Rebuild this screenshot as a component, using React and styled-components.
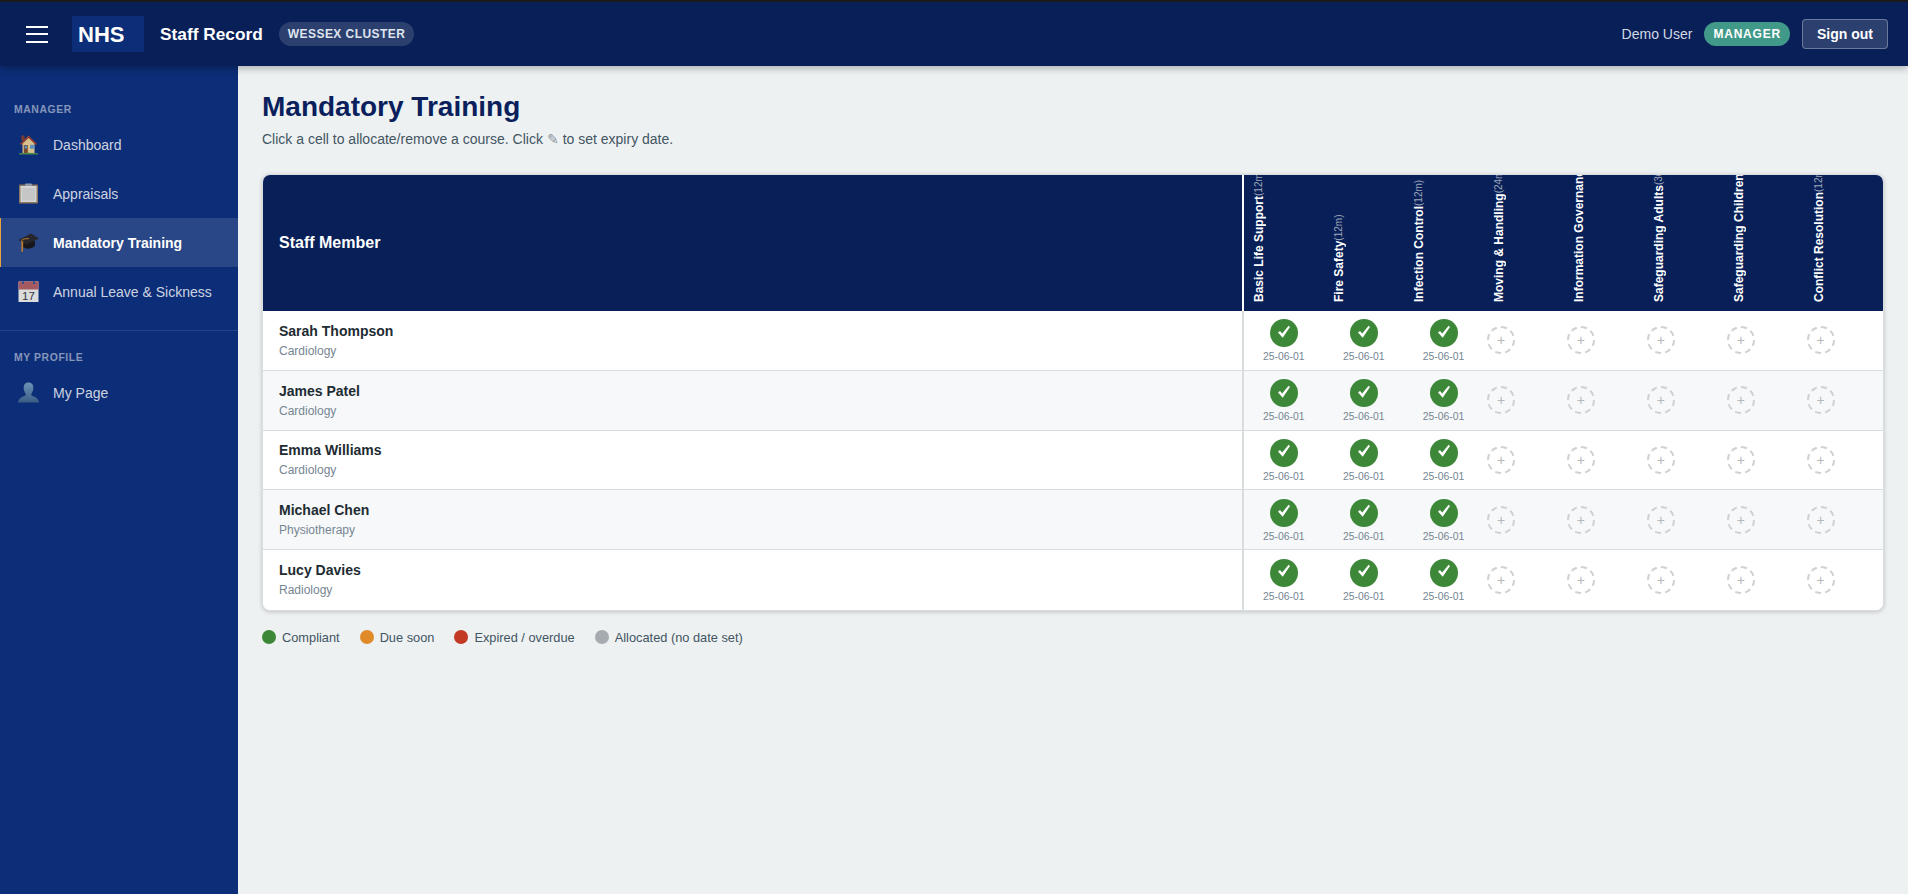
import React from 'react';
import styled, { createGlobalStyle } from 'styled-components';

const GlobalStyle = createGlobalStyle`
  * { box-sizing: border-box; }
  html, body { margin: 0; padding: 0; height: 100%; }
  body {
    font-family: "Liberation Sans", Arial, sans-serif;
    background: #eef1f2;
    color: #212b32;
    overflow: hidden;
  }
`;

const Shell = styled.div`
  display: flex;
  flex-direction: column;
  height: 894px;
  border-top: 2px solid #1c1c1c;
`;

const Header = styled.header`
  height: 64px;
  flex: none;
  display: flex;
  align-items: center;
  padding: 0 20px 0 26px;
  background: #081f57;
  box-shadow: 0 2px 8px rgba(0, 0, 0, 0.3);
  position: relative;
  z-index: 2;
`;

const Burger = styled.div`
  width: 22px;
  height: 17px;
  display: flex;
  flex-direction: column;
  justify-content: space-between;
  margin-right: 24px;
  span { display: block; height: 2px; background: #fff; }
`;

const Logo = styled.div`
  width: 72px;
  height: 36px;
  padding-left: 6px;
  background: #0c2d77;
  color: #fff;
  font-size: 22px;
  font-weight: 700;
  line-height: 38px;
  margin-right: 16px;
`;

const AppName = styled.div`
  color: #fff;
  font-size: 17.3px;
  font-weight: 700;
  margin-right: 16px;
`;

const Pill = styled.span`
  height: 24px;
  padding: 0 9px;
  border-radius: 12px;
  display: inline-flex;
  align-items: center;
  font-size: 12px;
  font-weight: 700;
  letter-spacing: ${p => (p.$role ? '0.8px' : '0.45px')};
  color: ${p => (p.$role ? '#fff' : '#dfe4ee')};
  background: ${p => (p.$role ? '#41998a' : 'rgba(255,255,255,0.15)')};
`;

const UserArea = styled.div`
  margin-left: auto;
  display: flex;
  align-items: center;
  gap: 12px;
`;

const UserName = styled.span`
  color: #d3d9e6;
  font-size: 14px;
`;

const SignOut = styled.button`
  height: 30px;
  width: 86px;
  padding: 0;
  font-family: inherit;
  font-size: 14px;
  font-weight: 700;
  color: #fff;
  background: rgba(255, 255, 255, 0.15);
  border: 1px solid rgba(255, 255, 255, 0.3);
  border-radius: 4px;
`;

const Body = styled.div`
  flex: 1;
  display: flex;
  min-height: 0;
`;

const Sidebar = styled.nav`
  width: 238px;
  flex: none;
  background: #0c2d77;
  padding-top: 34px;
`;

const SectionLabel = styled.div`
  padding: 0 14px;
  height: 20px;
  line-height: 20px;
  font-size: 10.4px;
  font-weight: 700;
  letter-spacing: 0.6px;
  color: rgba(255, 255, 255, 0.5);
`;

const Divider = styled.div`
  height: 1px;
  background: rgba(255, 255, 255, 0.1);
  margin: 14px 0 17px;
`;

const NavItem = styled.a`
  height: 49px;
  display: flex;
  align-items: center;
  gap: 14px;
  padding-left: ${p => (p.$active ? '17px' : '18px')};
  font-size: 14px;
  font-weight: ${p => (p.$active ? 700 : 400)};
  color: ${p => (p.$active ? '#fff' : 'rgba(255,255,255,0.8)')};
  background: ${p => (p.$active ? 'rgba(255,255,255,0.12)' : 'transparent')};
  border-left: ${p => (p.$active ? '1px solid #e8a33d' : 'none')};
`;

const IconSvg = styled.svg`
  width: 21px;
  height: 21px;
  flex: none;
`;

const HouseIcon = () => (
  <IconSvg viewBox="0 0 21 21">
    <rect x="3.5" y="1.5" width="3" height="5" fill="#7d3a2c" />
    <path d="M4.5 9L10.5 3.5 16.5 9V19H4.5Z" fill="#d8bf8e" />
    <path d="M1.8 10L10.5 1.5 19.2 10 17.8 11 10.5 4 3.2 11Z" fill="#92402e" />
    <rect x="5.8" y="11" width="4" height="8" fill="#7a4a30" />
    <rect x="6.6" y="11.6" width="2.4" height="3" fill="#5b8fbd" />
    <rect x="12" y="10.8" width="4.4" height="4" fill="#5e92bf" />
    <path d="M1 19.3Q10.5 18 20 19.3V20.6H1Z" fill="#4b8a4a" />
  </IconSvg>
);

const ClipboardIcon = () => (
  <IconSvg viewBox="0 0 21 21">
    <rect x="1" y="1.5" width="19" height="19" rx="1" fill="#8c765e" />
    <rect x="2.5" y="3" width="16" height="16" fill="#d5d5d5" />
    <rect x="4" y="5" width="13" height="12.5" fill="#c6c6c6" />
    <rect x="7" y="0.5" width="7" height="2.5" rx="1" fill="#8f99aa" />
  </IconSvg>
);

const CapIcon = () => (
  <IconSvg viewBox="0 0 21 21">
    <path d="M5 10V15Q11 19 17 14V9Z" fill="#17171c" />
    <path d="M0.5 8L13 1.5 21 6.5 8.5 12.5Z" fill="#26262c" />
    <path d="M3.5 9Q4 7 6 7L11 6.5" fill="none" stroke="#b9772a" strokeWidth="1" />
    <path d="M3.4 9L5.3 9.4 4.9 19.8 3.4 20Z" fill="#c07c2a" />
  </IconSvg>
);

const CalendarIcon = () => (
  <IconSvg viewBox="0 0 21 21">
    <rect x="0.5" y="0.5" width="20" height="20.5" fill="#dcdcdc" />
    <rect x="0.5" y="0.5" width="20" height="8" fill="#a45a60" />
    <rect x="4" y="0.5" width="2" height="2.5" fill="#2f4f8f" />
    <rect x="15" y="0.5" width="2" height="2.5" fill="#2f4f8f" />
    <text x="10.5" y="19" textAnchor="middle" fontSize="11.5" fontFamily="Liberation Sans" fill="#33363d">17</text>
  </IconSvg>
);

const PersonIcon = () => (
  <IconSvg viewBox="0 0 21 21">
    <defs>
      <linearGradient id="bust" x1="0" y1="0" x2="0" y2="1">
        <stop offset="0" stopColor="#6b94b8" />
        <stop offset="1" stopColor="#3b5d85" />
      </linearGradient>
    </defs>
    <path
      d="M10.5 0.5C14 0.5 15.5 3 15.3 6.5 15.1 9.5 13.5 11.5 13.2 12.5 13 13.6 14.5 14 17 15 19.5 16 20.5 18 21 20.5H0C0.5 18 1.5 16 4 15 6.5 14 8 13.6 7.8 12.5 7.5 11.5 5.9 9.5 5.7 6.5 5.5 3 7 0.5 10.5 0.5Z"
      fill="url(#bust)"
    />
  </IconSvg>
);

const Main = styled.main`
  flex: 1;
  min-width: 0;
  padding: 24px;
`;

const Title = styled.h1`
  margin: 0 0 5px;
  font-size: 28px;
  line-height: 34px;
  font-weight: 700;
  color: #0a1f5c;
`;

const Subtitle = styled.p`
  margin: 0 0 25px;
  font-size: 14px;
  line-height: 20px;
  color: #425563;
`;

const Pencil = styled.span`
  color: #86919a;
`;

const Card = styled.div`
  border: 1px solid #d8dde0;
  border-radius: 8px;
  overflow: hidden;
  background: #fff;
  box-shadow: 0 1px 4px rgba(0, 0, 0, 0.2);
`;

const Table = styled.table`
  width: 100%;
  border-collapse: separate;
  border-spacing: 0;
  table-layout: fixed;
`;

const HeadRow = styled.tr`
  background: #081f57;
`;

const StaffHead = styled.th`
  padding: 0 16px;
  text-align: left;
  font-size: 16px;
  font-weight: 700;
  color: #fff;
  border-right: 2px solid #fff;
`;

const CourseHead = styled.th`
  width: 79.9px;
  padding: 0;
`;

const CourseClip = styled.div`
  height: 136px;
  padding: 0 0 9px 7.5px;
  overflow: hidden;
`;

const CourseLabel = styled.div`
  height: 127px;
  writing-mode: vertical-rl;
  transform: rotate(180deg);
  white-space: nowrap;
  text-align: left;
  font-size: 12px;
  line-height: 16px;
  font-weight: 700;
  color: #fff;
`;

const Validity = styled.span`
  font-size: 10px;
  font-weight: 400;
  color: rgba(255, 255, 255, 0.6);
`;

const Row = styled.tr`
  height: 59.75px;
  background: ${p => (p.$alt ? '#f7f8fa' : '#fff')};
  td { border-bottom: ${p => (p.$last ? 'none' : '1px solid #d8dde0')}; }
`;

const StaffCell = styled.td`
  padding: 0 16px;
  border-right: 2px solid #d8dde0;
`;

const StaffName = styled.div`
  font-size: 14px;
  font-weight: 700;
  line-height: 18px;
  color: #212b32;
`;

const Dept = styled.div`
  margin-top: 4px;
  font-size: 12px;
  line-height: 15px;
  color: #768692;
`;

const CourseCell = styled.td`
  padding: 0;
`;

const CellInner = styled.div`
  display: flex;
  flex-direction: column;
  align-items: ${p => (p.$filled ? 'center' : 'flex-start')};
  padding-left: ${p => (p.$filled ? 0 : '3.5px')};
  padding-top: ${p => (p.$filled ? '2px' : 0)};
`;

const Tick = styled.span`
  width: 28px;
  height: 28px;
  border-radius: 50%;
  display: flex;
  align-items: center;
  justify-content: center;
  background: #3d8838;
  svg { margin-bottom: 3px; }
`;

const DateText = styled.span`
  margin-top: 3px;
  font-size: 10.4px;
  line-height: 13px;
  color: #768692;
`;

const EmptySlot = styled.span`
  width: 28px;
  height: 28px;
  border-radius: 50%;
  border: 2px dashed #cfd2d4;
  display: flex;
  align-items: center;
  justify-content: center;
  font-size: 14px;
  color: #b5b9bc;
`;

const Legend = styled.div`
  margin-top: 19px;
  display: flex;
  gap: 20px;
`;

const LegendItem = styled.div`
  display: flex;
  align-items: center;
  gap: 6px;
  font-size: 12.8px;
  color: #425563;
`;

const Dot = styled.span`
  width: 14px;
  height: 14px;
  border-radius: 50%;
  background: ${p => p.$color};
`;

const CheckMark = () => (
  <svg width="14" height="14" viewBox="0 0 14 14">
    <path d="M1 7.6L3 6.1 5.2 8.6 11.6 0.8 13 2 5.7 12.8Z" fill="#fff" />
  </svg>
);

const courses = [
  ['Basic Life Support', '12m', true],
  ['Fire Safety', '12m', true],
  ['Infection Control', '12m', true],
  ['Moving & Handling', '24m'],
  ['Information Governance', '12m'],
  ['Safeguarding Adults', '36m'],
  ['Safeguarding Children', '36m'],
  ['Conflict Resolution', '12m'],
];

const staff = [
  ['Sarah Thompson', 'Cardiology'],
  ['James Patel', 'Cardiology'],
  ['Emma Williams', 'Cardiology'],
  ['Michael Chen', 'Physiotherapy'],
  ['Lucy Davies', 'Radiology'],
];

const legend = [
  ['#3d8838', 'Compliant'],
  ['#e08a2a', 'Due soon'],
  ['#c23a24', 'Expired / overdue'],
  ['#a6abb0', 'Allocated (no date set)'],
];

export default function App() {
  return (
    <>
      <GlobalStyle />
      <Shell>
        <Header>
          <Burger><span /><span /><span /></Burger>
          <Logo>NHS</Logo>
          <AppName>Staff Record</AppName>
          <Pill>WESSEX CLUSTER</Pill>
          <UserArea>
            <UserName>Demo User</UserName>
            <Pill $role>MANAGER</Pill>
            <SignOut>Sign out</SignOut>
          </UserArea>
        </Header>
        <Body>
          <Sidebar>
            <SectionLabel>MANAGER</SectionLabel>
            <NavItem><HouseIcon />Dashboard</NavItem>
            <NavItem><ClipboardIcon />Appraisals</NavItem>
            <NavItem $active><CapIcon />Mandatory Training</NavItem>
            <NavItem><CalendarIcon />Annual Leave &amp; Sickness</NavItem>
            <Divider />
            <SectionLabel>MY PROFILE</SectionLabel>
            <NavItem><PersonIcon />My Page</NavItem>
          </Sidebar>
          <Main>
            <Title>Mandatory Training</Title>
            <Subtitle>Click a cell to allocate/remove a course. Click <Pencil>✎</Pencil> to set expiry date.</Subtitle>
            <Card>
              <Table>
                <thead>
                  <HeadRow>
                    <StaffHead>Staff Member</StaffHead>
                    {courses.map(([name, months]) => (
                      <CourseHead key={name}>
                        <CourseClip>
                          <CourseLabel>{name}<Validity>({months})</Validity></CourseLabel>
                        </CourseClip>
                      </CourseHead>
                    ))}
                  </HeadRow>
                </thead>
                <tbody>
                  {staff.map(([name, dept], i) => (
                    <Row key={name} $alt={i % 2 === 1} $last={i === staff.length - 1}>
                      <StaffCell>
                        <StaffName>{name}</StaffName>
                        <Dept>{dept}</Dept>
                      </StaffCell>
                      {courses.map(([course, , done]) => (
                        <CourseCell key={course}>
                          <CellInner $filled={done}>
                            {done ? (
                              <>
                                <Tick><CheckMark /></Tick>
                                <DateText>25-06-01</DateText>
                              </>
                            ) : (
                              <EmptySlot>+</EmptySlot>
                            )}
                          </CellInner>
                        </CourseCell>
                      ))}
                    </Row>
                  ))}
                </tbody>
              </Table>
            </Card>
            <Legend>
              {legend.map(([color, label]) => (
                <LegendItem key={label}><Dot $color={color} />{label}</LegendItem>
              ))}
            </Legend>
          </Main>
        </Body>
      </Shell>
    </>
  );
}
